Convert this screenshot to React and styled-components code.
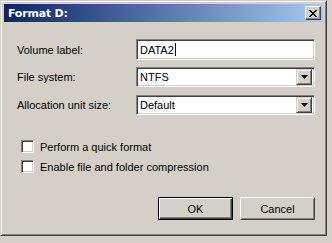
import React from "react";
import styled, { createGlobalStyle } from "styled-components";

const Global = createGlobalStyle`
  html, body { margin: 0; padding: 0; background: #d4d0c8; }
  body { width: 332px; height: 243px; overflow: hidden; font-family: "Liberation Sans", Arial, sans-serif; font-size: 11px; color: #000; }
`;

const Win = styled.div`
  box-sizing: border-box;
  width: 327px;
  height: 236px;
  background: #d4d0c8;
  border-top: 1px solid #d4d0c8;
  border-left: 1px solid #d4d0c8;
  border-right: 1px solid #404040;
  border-bottom: 1px solid #404040;
  box-shadow: inset 1px 1px 0 #ffffff, inset -1px -1px 0 #808080;
  padding: 3px;
  display: flex;
  flex-direction: column;
`;

const TitleBar = styled.div`
  height: 18px;
  display: flex;
  align-items: center;
  justify-content: space-between;
  padding: 0 2px 0 4px;
  background: linear-gradient(to right, #0a246a, #a6caf0);
`;

const Title = styled.span`
  color: #fff;
  font-family: "DejaVu Sans", Verdana, sans-serif;
  font-weight: bold;
  font-size: 11px;
  letter-spacing: -0.2px;
`;

const CloseBtn = styled.div`
  box-sizing: border-box;
  width: 16px;
  height: 14px;
  background: #d4d0c8;
  border-top: 1px solid #fff;
  border-left: 1px solid #fff;
  border-right: 1px solid #404040;
  border-bottom: 1px solid #404040;
  box-shadow: inset -1px -1px 0 #808080;
  display: flex;
  align-items: center;
  justify-content: center;
`;

const Client = styled.div`
  flex: 1;
  display: flex;
  flex-direction: column;
  padding: 17px 8px 0 13px;
`;

const Row = styled.div`
  display: flex;
  align-items: center;
  height: ${(p) => p.h}px;
  margin-bottom: ${(p) => p.mb}px;
`;

const Label = styled.span`
  width: 119px;
  flex: none;
`;

const Sunken = styled.div`
  box-sizing: border-box;
  flex: 1;
  height: 100%;
  background: #fff;
  border-top: 1px solid #808080;
  border-left: 1px solid #808080;
  border-right: 1px solid #fff;
  border-bottom: 1px solid #fff;
  box-shadow: inset 1px 1px 0 #404040, inset -1px -1px 0 #d4d0c8;
  display: flex;
  align-items: center;
  padding: 2px 2px 2px 3px;
`;

const Value = styled.span`
  flex: 1;
  display: flex;
  align-items: center;
`;

const Caret = styled.span`
  display: inline-block;
  width: 1px;
  height: 13px;
  background: #000;
  margin-left: 1px;
`;

const DropBtn = styled.div`
  box-sizing: border-box;
  width: 16px;
  height: 16px;
  flex: none;
  background: #d4d0c8;
  border-top: 1px solid #d4d0c8;
  border-left: 1px solid #d4d0c8;
  border-right: 1px solid #404040;
  border-bottom: 1px solid #404040;
  box-shadow: inset 1px 1px 0 #fff, inset -1px -1px 0 #808080;
  display: flex;
  align-items: center;
  justify-content: center;
`;

const Check = styled.div`
  display: flex;
  align-items: center;
  gap: 6px;
  margin-left: 4px;
  height: 13px;
  margin-bottom: ${(p) => p.mb}px;
`;

const Box = styled.div`
  box-sizing: border-box;
  width: 13px;
  height: 13px;
  background: #fff;
  border-top: 1px solid #808080;
  border-left: 1px solid #808080;
  border-right: 1px solid #fff;
  border-bottom: 1px solid #fff;
  box-shadow: inset 1px 1px 0 #404040, inset -1px -1px 0 #d4d0c8;
`;

const Buttons = styled.div`
  display: flex;
  justify-content: flex-end;
  gap: 7px;
  margin-top: 24px;
`;

const Button = styled.div`
  box-sizing: border-box;
  width: 75px;
  height: 23px;
  display: flex;
  align-items: center;
  justify-content: center;
  background: #d4d0c8;
  border: 1px solid;
  border-color: ${(p) => (p.primary ? "#000" : "#fff #404040 #404040 #fff")};
  box-shadow: ${(p) =>
    p.primary
      ? "inset 1px 1px 0 #fff, inset -1px -1px 0 #404040, inset -2px -2px 0 #808080"
      : "inset 1px 1px 0 #d4d0c8, inset -1px -1px 0 #808080"};
`;

const Arrow = () => (
  <svg width="7" height="4" viewBox="0 0 7 4">
    <path d="M0 0h7L3.5 4z" fill="#000" />
  </svg>
);

const XIcon = () => (
  <svg width="8" height="7" viewBox="0 0 8 7" shapeRendering="crispEdges">
    <path d="M0 0h2v1h-2zM6 0h2v1h-2zM1 1h2v1h-2zM5 1h2v1h-2zM2 2h4v1h-4zM3 3h2v1h-2zM2 4h4v1h-4zM1 5h2v1h-2zM5 5h2v1h-2zM0 6h2v1h-2zM6 6h2v1h-2z" fill="#000" />
  </svg>
);

export default function App() {
  return (
    <>
      <Global />
      <Win>
        <TitleBar>
          <Title>Format D:</Title>
          <CloseBtn>
            <XIcon />
          </CloseBtn>
        </TitleBar>
        <Client>
          <Row h={21} mb={7}>
            <Label>Volume label:</Label>
            <Sunken>
              <Value>
                DATA2<Caret />
              </Value>
            </Sunken>
          </Row>
          <Row h={20} mb={8}>
            <Label>File system:</Label>
            <Sunken>
              <Value>NTFS</Value>
              <DropBtn>
                <Arrow />
              </DropBtn>
            </Sunken>
          </Row>
          <Row h={20} mb={25}>
            <Label>Allocation unit size:</Label>
            <Sunken>
              <Value>Default</Value>
              <DropBtn>
                <Arrow />
              </DropBtn>
            </Sunken>
          </Row>
          <Check mb={7}>
            <Box />
            <span>Perform a quick format</span>
          </Check>
          <Check mb={0}>
            <Box />
            <span>Enable file and folder compression</span>
          </Check>
          <Buttons>
            <Button primary>OK</Button>
            <Button>Cancel</Button>
          </Buttons>
        </Client>
      </Win>
    </>
  );
}
